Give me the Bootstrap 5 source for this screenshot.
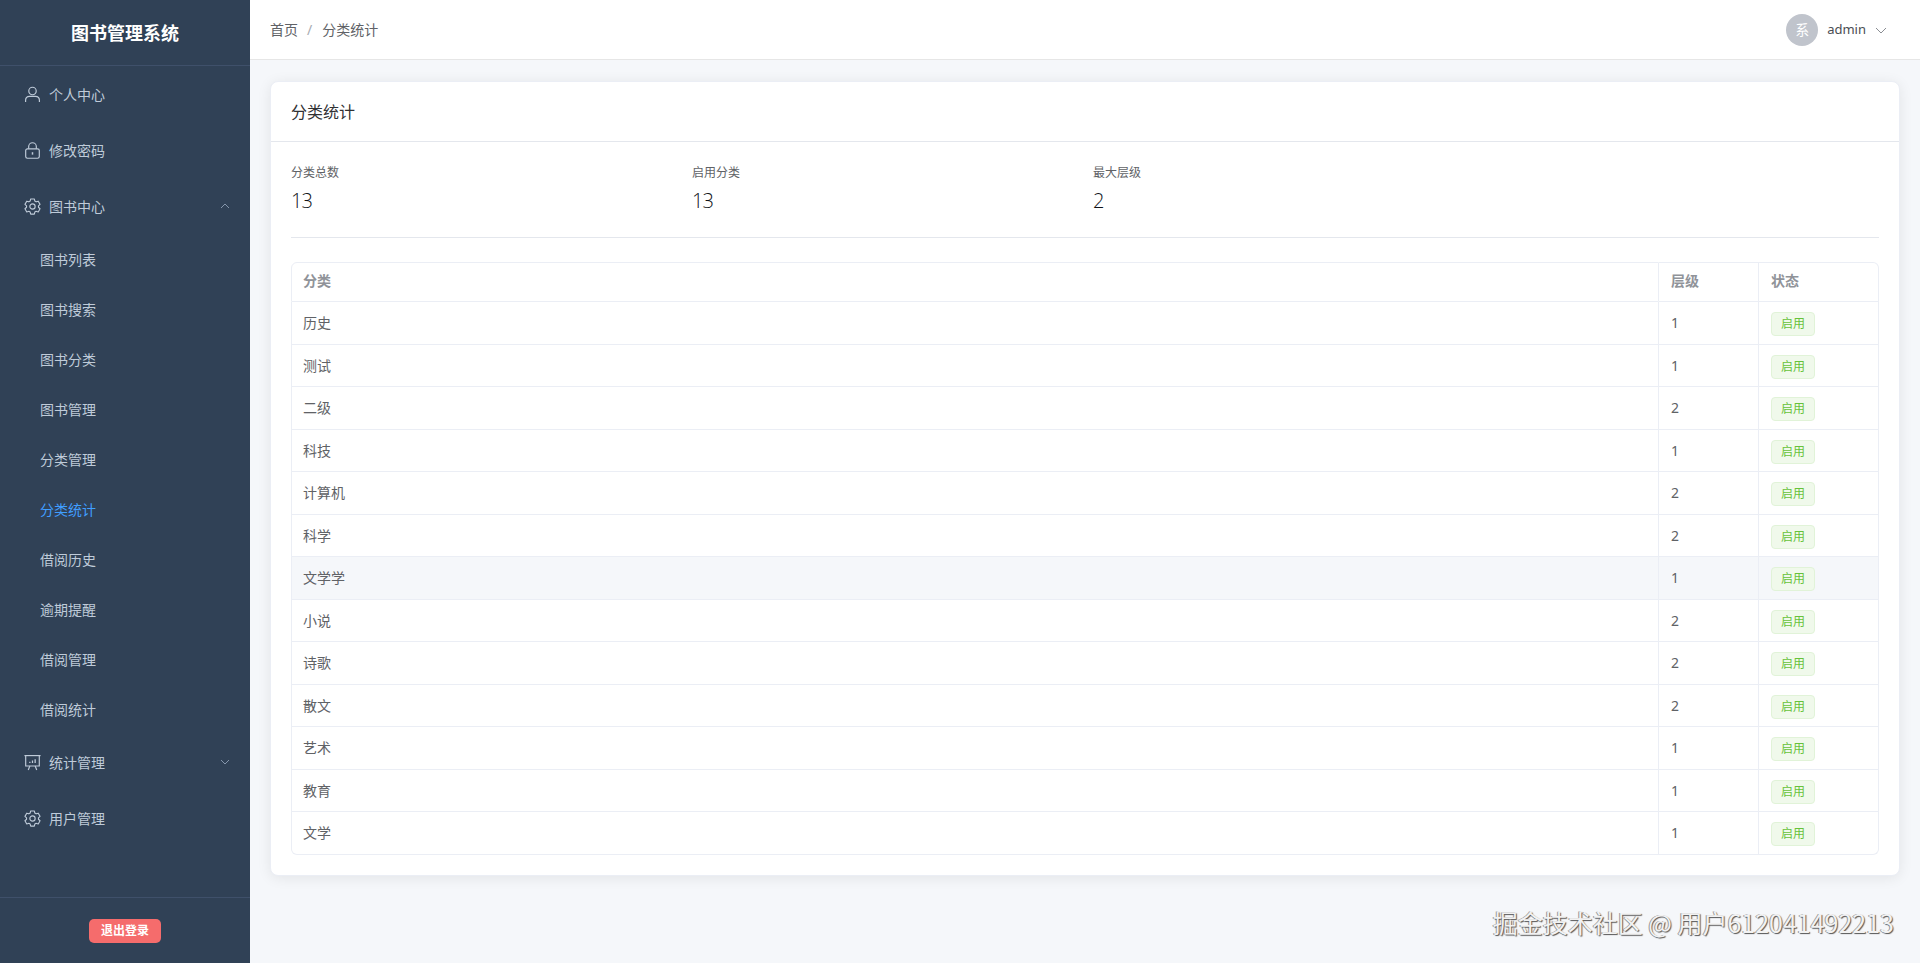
<!DOCTYPE html>
<html lang="zh-CN">
<head>
<meta charset="utf-8">
<title>分类统计</title>
<link href="https://cdn.jsdelivr.net/npm/bootstrap@5.3.0/dist/css/bootstrap.min.css" rel="stylesheet">
<style>
html,body{height:100%}
body{font-family:"Noto Sans","Noto Sans CJK SC",sans-serif;font-size:14px;color:#606266;background:#f5f7fa;overflow:hidden}
.app-shell{height:963px;position:relative}
.side{width:250px;background:#304156;color:#bfcbd9;flex:none}
.side-brand{height:66px;border-bottom:1px solid #3f506a;color:#fff;font-size:18px;font-weight:700;line-height:67px;text-align:center}
.side-menu{flex:1 1 auto}
.side-link{height:56px;padding:0 20px 0 23.5px;color:#bfcbd9;font-size:14px;display:flex;align-items:center;gap:8.5px;text-decoration:none}
.side-link svg.ico{width:17px;height:17px;flex:none}
.side-link .chev{margin-left:auto;width:10px;height:10px;flex:none}
.side-sub{height:50px;padding-left:40px;color:#bfcbd9;font-size:14px;display:flex;align-items:center;text-decoration:none}
.side-sub.on{color:#409eff}
.side-foot{height:66px;border-top:1px solid #3f506a;padding-top:21px;text-align:center}
.logout{width:72px;height:24px;padding:0;background:#f56c6c;border:0;border-radius:5px;color:#fff;font-size:12px;font-weight:700;line-height:24px}
.main-col{min-width:0}
.topbar{height:60px;background:#fff;border-bottom:1px solid #e6e6e6;padding:0 33px 0 20px;flex:none}
.topbar .breadcrumb{margin:0;font-size:14px}
.topbar .breadcrumb-item,.topbar .breadcrumb-item a{color:#606266;text-decoration:none}
.topbar .breadcrumb-item+.breadcrumb-item{padding-left:9px}
.topbar .breadcrumb-item+.breadcrumb-item::before{color:#a8abb2;padding-right:10px}
.avatar-dot{width:32px;height:32px;border-radius:50%;background:#c0c4cc;color:#fff;font-size:14px;line-height:32px;text-align:center}
.user-name{font-size:13px;color:#4a4d52;margin-left:9px}
.user-chev{width:12px;height:12px;margin-left:9px}
.content-area{padding:21px 20px 20px}
.panel{background:#fff;border:1px solid #ebeef5;border-radius:8px;box-shadow:0 2px 14px rgba(0,0,0,.08)}
.panel-head{height:60px;border-bottom:1px solid #e4e7ed;padding:0 20px;font-size:16px;color:#303133;line-height:60px}
.panel-body{padding:21px 20px 20px}
.stats{display:grid;grid-template-columns:repeat(3,401px);height:75px;border-bottom:1px solid #e4e7ed}
.stat-label{font-size:12px;color:#606266;line-height:20px}
.stat-value{font-family:"Open Sans","Noto Sans",sans-serif;font-weight:300;letter-spacing:-1px;font-size:20px;color:#111318;line-height:28px;margin-top:4px}
.data-wrap{margin-top:24px;width:1588px}
.data-table{table-layout:fixed;width:1588px;margin:0;border-collapse:separate;border-spacing:0;--bs-table-bg:transparent;color:#606266;font-size:14px}
.data-table th,.data-table td{padding:0 12px;vertical-align:middle;border-bottom:1px solid #ebeef5;border-right:1px solid #ebeef5;color:#606266;box-shadow:none}
.data-table th:first-child,.data-table td:first-child{border-left:1px solid #ebeef5;padding-left:11px}
.data-table th{height:40px;color:#909399;font-weight:700;border-top:1px solid #ebeef5;padding-bottom:3px}
.data-table th:first-child{border-top-left-radius:6px}
.data-table th:last-child{border-top-right-radius:6px}
.data-table tr:last-child td:first-child{border-bottom-left-radius:6px}
.data-table tr:last-child td:last-child{border-bottom-right-radius:6px}
.data-table td{height:42.5px}
.data-table tr.row-hover td{background:#f5f7fa}
.tag-on{display:inline-block;width:44px;height:24px;margin-top:3px;margin-left:0;background:#f0f9eb;border:1px solid #e1f3d8;border-radius:4px;color:#67c23a;font-size:12px;line-height:22px;text-align:center;vertical-align:middle}
.mark-text{position:absolute;right:26px;top:906px;font-size:25px;line-height:32px;color:#f2f2f2;text-shadow:1px 1px 1px #555,-1px 0 0 #999;white-space:nowrap;font-family:"Noto Sans CJK SC","Noto Sans",sans-serif}
</style>
</head>
<body>
<div class="app-shell d-flex">
  <aside class="side d-flex flex-column">
    <div class="side-brand">图书管理系统</div>
    <nav class="side-menu nav flex-column flex-nowrap">
      <a class="side-link" href="#"><svg class="ico" viewBox="0 0 16 16" fill="none" stroke="#bfcbd9" stroke-width="1.1"><circle cx="8" cy="4.7" r="3.5"/><path d="M1.5 15v-1.6c0-2.3 1.7-3.7 3.8-3.7h5.4c2.1 0 3.8 1.4 3.8 3.7V15"/></svg><span>个人中心</span></a>
      <a class="side-link" href="#"><svg class="ico" viewBox="0 0 16 16" fill="none" stroke="#bfcbd9" stroke-width="1.1"><rect x="1.6" y="6.4" width="12.8" height="8.9" rx="1.6"/><path d="M4.4 6.4V4.3a3.6 3.6 0 0 1 7.2 0v2.1"/><path d="M8 9.6v2.3" stroke-width="1.4"/></svg><span>修改密码</span></a>
      <a class="side-link" href="#"><svg class="ico" viewBox="0 0 16 16" fill="none" stroke="#bfcbd9" stroke-width="1.05" stroke-linejoin="round"><path d="M6.3.9h3.4l.5 2 1.2.7 2-.6 1.7 3-1.5 1.4v1.3l1.5 1.4-1.7 3-2-.6-1.2.7-.5 2H6.3l-.5-2-1.2-.7-2 .6-1.7-3 1.5-1.4V7.4L.9 6l1.7-3 2 .6 1.2-.7z"/><circle cx="8" cy="8" r="2.5"/></svg><span>图书中心</span><svg class="chev" viewBox="0 0 10 10" fill="none" stroke="#8fa0b5" stroke-width=".9"><path d="M1 7l4-4 4 4"/></svg></a>
      <a class="side-sub" href="#">图书列表</a>
      <a class="side-sub" href="#">图书搜索</a>
      <a class="side-sub" href="#">图书分类</a>
      <a class="side-sub" href="#">图书管理</a>
      <a class="side-sub" href="#">分类管理</a>
      <a class="side-sub on" href="#">分类统计</a>
      <a class="side-sub" href="#">借阅历史</a>
      <a class="side-sub" href="#">逾期提醒</a>
      <a class="side-sub" href="#">借阅管理</a>
      <a class="side-sub" href="#">借阅统计</a>
      <a class="side-link" href="#"><svg class="ico" viewBox="0 0 16 16" fill="none" stroke="#bfcbd9" stroke-width="1.1"><path d="M.4 1.5h15.2"/><path d="M1.6 1.5v9.8h12.8V1.5"/><path d="M5.5 11.3L4 15M10.5 11.3L12 15"/><path d="M5.5 8.4V7.2M8 8.4V6.2M10.5 8.4V5" stroke-width="1.2"/></svg><span>统计管理</span><svg class="chev" viewBox="0 0 10 10" fill="none" stroke="#8fa0b5" stroke-width=".9"><path d="M1 3l4 4 4-4"/></svg></a>
      <a class="side-link" href="#"><svg class="ico" viewBox="0 0 16 16" fill="none" stroke="#bfcbd9" stroke-width="1.05" stroke-linejoin="round"><path d="M6.3.9h3.4l.5 2 1.2.7 2-.6 1.7 3-1.5 1.4v1.3l1.5 1.4-1.7 3-2-.6-1.2.7-.5 2H6.3l-.5-2-1.2-.7-2 .6-1.7-3 1.5-1.4V7.4L.9 6l1.7-3 2 .6 1.2-.7z"/><circle cx="8" cy="8" r="2.5"/></svg><span>用户管理</span></a>
    </nav>
    <div class="side-foot"><button class="btn logout" type="button">退出登录</button></div>
  </aside>
  <div class="main-col flex-grow-1 d-flex flex-column">
    <header class="topbar d-flex align-items-center justify-content-between">
      <ol class="breadcrumb">
        <li class="breadcrumb-item"><a href="#">首页</a></li>
        <li class="breadcrumb-item">分类统计</li>
      </ol>
      <div class="d-flex align-items-center">
        <div class="avatar-dot">系</div>
        <span class="user-name">admin</span>
        <svg class="user-chev" viewBox="0 0 12 12" fill="none" stroke="#8a8d93" stroke-width="1"><path d="M1 4l5 5 5-5"/></svg>
      </div>
    </header>
    <main class="content-area">
      <section class="panel">
        <div class="panel-head">分类统计</div>
        <div class="panel-body">
          <div class="stats">
            <div><div class="stat-label">分类总数</div><div class="stat-value">13</div></div>
            <div><div class="stat-label">启用分类</div><div class="stat-value">13</div></div>
            <div><div class="stat-label">最大层级</div><div class="stat-value">2</div></div>
          </div>
          <div class="data-wrap">
            <table class="table data-table">
              <colgroup><col style="width:1368px"><col style="width:100px"><col style="width:120px"></colgroup>
              <thead><tr><th>分类</th><th>层级</th><th>状态</th></tr></thead>
              <tbody>
                <tr><td>历史</td><td>1</td><td><span class="tag-on">启用</span></td></tr>
                <tr><td>测试</td><td>1</td><td><span class="tag-on">启用</span></td></tr>
                <tr><td>二级</td><td>2</td><td><span class="tag-on">启用</span></td></tr>
                <tr><td>科技</td><td>1</td><td><span class="tag-on">启用</span></td></tr>
                <tr><td>计算机</td><td>2</td><td><span class="tag-on">启用</span></td></tr>
                <tr><td>科学</td><td>2</td><td><span class="tag-on">启用</span></td></tr>
                <tr class="row-hover"><td>文学学</td><td>1</td><td><span class="tag-on">启用</span></td></tr>
                <tr><td>小说</td><td>2</td><td><span class="tag-on">启用</span></td></tr>
                <tr><td>诗歌</td><td>2</td><td><span class="tag-on">启用</span></td></tr>
                <tr><td>散文</td><td>2</td><td><span class="tag-on">启用</span></td></tr>
                <tr><td>艺术</td><td>1</td><td><span class="tag-on">启用</span></td></tr>
                <tr><td>教育</td><td>1</td><td><span class="tag-on">启用</span></td></tr>
                <tr><td>文学</td><td>1</td><td><span class="tag-on">启用</span></td></tr>
              </tbody>
            </table>
          </div>
        </div>
      </section>
    </main>
  </div>
  <div class="mark-text">掘金技术社区 @ 用户612041492213</div>
</div>
<script src="https://cdn.jsdelivr.net/npm/bootstrap@5.3.0/dist/js/bootstrap.bundle.min.js"></script>
</body>
</html>
